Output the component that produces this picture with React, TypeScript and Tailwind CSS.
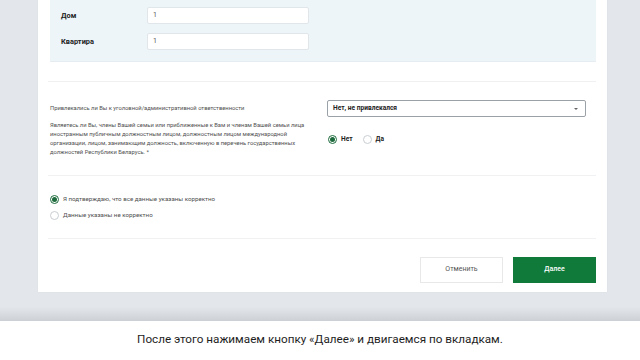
import React from "react";

function Radio({ checked }: { checked: boolean }) {
  return (
    <span
      className={
        "flex h-[9px] w-[9px] shrink-0 items-center justify-center rounded-full border bg-white " +
        (checked ? "border-[#1d6b3c]" : "border-[#c9ced3]")
      }
    >
      {checked && <span className="h-[5px] w-[5px] rounded-full bg-[#1d6b3c]" />}
    </span>
  );
}

export default function App() {
  return (
    <div
      className="flex h-[360px] w-[640px] flex-col overflow-hidden bg-white"
      style={{ fontFamily: "Roboto, 'Noto Sans', sans-serif" }}
    >
      <div className="relative h-[321px] bg-[#e3e7eb]">
        <div className="ml-[38px] flex h-[292px] w-[569px] flex-col bg-white pl-[12px] pr-[11px] shadow-[0_0_1px_rgba(0,0,0,0.08)]">
          {/* address panel */}
          <div className="flex h-[62px] flex-col gap-[9px] border-b border-[#e6edf2] bg-[#edf5f9] pl-[11px] pt-[7px]">
            <div className="flex items-center">
              <span className="w-[86px] pt-[1px] text-[7.4px] font-bold text-[#222]">Дом</span>
              <div className="flex h-[17px] w-[162px] items-center rounded-[2px] border border-[#e1e6ea] bg-white pl-[5px] text-[7px] text-[#555]">
                1
              </div>
            </div>
            <div className="flex items-center">
              <span className="w-[86px] pt-[1px] text-[7.4px] font-bold text-[#222]">Квартира</span>
              <div className="flex h-[17px] w-[162px] items-center rounded-[2px] border border-[#e1e6ea] bg-white pl-[5px] text-[7px] text-[#555]">
                1
              </div>
            </div>
          </div>

          <div className="mt-[19px] ml-[-2px] border-t border-[#eef0f2]" />

          {/* questions */}
          <div className="flex flex-col pt-[18px]">
            <div className="flex items-center">
              <div className="w-[277px] text-[5.8px] leading-[9px] text-[#4f4f4f]">
                Привлекались ли Вы к уголовной/административной ответственности
              </div>
              <div className="relative flex h-[17px] w-[259px] items-center rounded-[2px] border border-[#9aa1a7] bg-white pl-[5px] text-[6.6px] font-bold text-[#222]">
                Нет, не привлекался
                <span className="absolute right-[7px] top-[7px] h-0 w-0 border-x-[2px] border-t-[2px] border-x-transparent border-t-[#666]" />
              </div>
            </div>
            <div className="mt-[4px] flex items-center">
              <div className="w-[277px] pr-[20px] text-[5.8px] leading-[9px] text-[#4f4f4f]">
                Являетесь ли Вы, члены Вашей семьи или приближенные к Вам и членам Вашей семьи лица
                иностранным публичным должностным лицом, должностным лицом международной
                организации, лицом, занимающим должность, включенную в перечень государственных
                должностей Республики Беларусь. *
              </div>
              <div className="flex items-center gap-[10px] pl-[1px] pt-[2px]">
                <div className="flex items-center gap-[4px]">
                  <Radio checked />
                  <span className="text-[6.6px] font-bold text-[#222]">Нет</span>
                </div>
                <div className="flex items-center gap-[4px]">
                  <Radio checked={false} />
                  <span className="text-[6.6px] font-bold text-[#222]">Да</span>
                </div>
              </div>
            </div>
          </div>

          <div className="mt-[18px] ml-[-2px] border-t border-[#f0f1f3]" />

          <div className="flex flex-col gap-[7px] pt-[19px]">
            <div className="flex items-center gap-[4px]">
              <Radio checked />
              <span className="text-[6.2px] text-[#4f4f4f]">Я подтверждаю, что все данные указаны корректно</span>
            </div>
            <div className="flex items-center gap-[4px]">
              <Radio checked={false} />
              <span className="text-[6.2px] text-[#4f4f4f]">Данные указаны не корректно</span>
            </div>
          </div>

          <div className="mt-[17px] ml-[-2px] border-t border-[#f0f1f3]" />

          <div className="flex justify-end gap-[10px] pt-[18px]">
            <div className="flex h-[26px] w-[83px] items-center justify-center border border-[#e6e8ea] bg-white text-[7px] text-[#555]">
              Отменить
            </div>
            <div className="flex h-[26px] w-[83px] items-center justify-center bg-[#0f7a3a] text-[7px] font-medium text-white">
              Далее
            </div>
          </div>
        </div>
        <div className="absolute bottom-0 left-0 h-[14px] w-full bg-gradient-to-b from-[#e3e7eb] to-[#cdd1d5]" />
      </div>
      <div className="flex flex-1 items-center justify-center pb-[1px] text-[11.7px] text-[#1e1e1e]">
        После этого нажимаем кнопку «Далее» и двигаемся по вкладкам.
      </div>
    </div>
  );
}
